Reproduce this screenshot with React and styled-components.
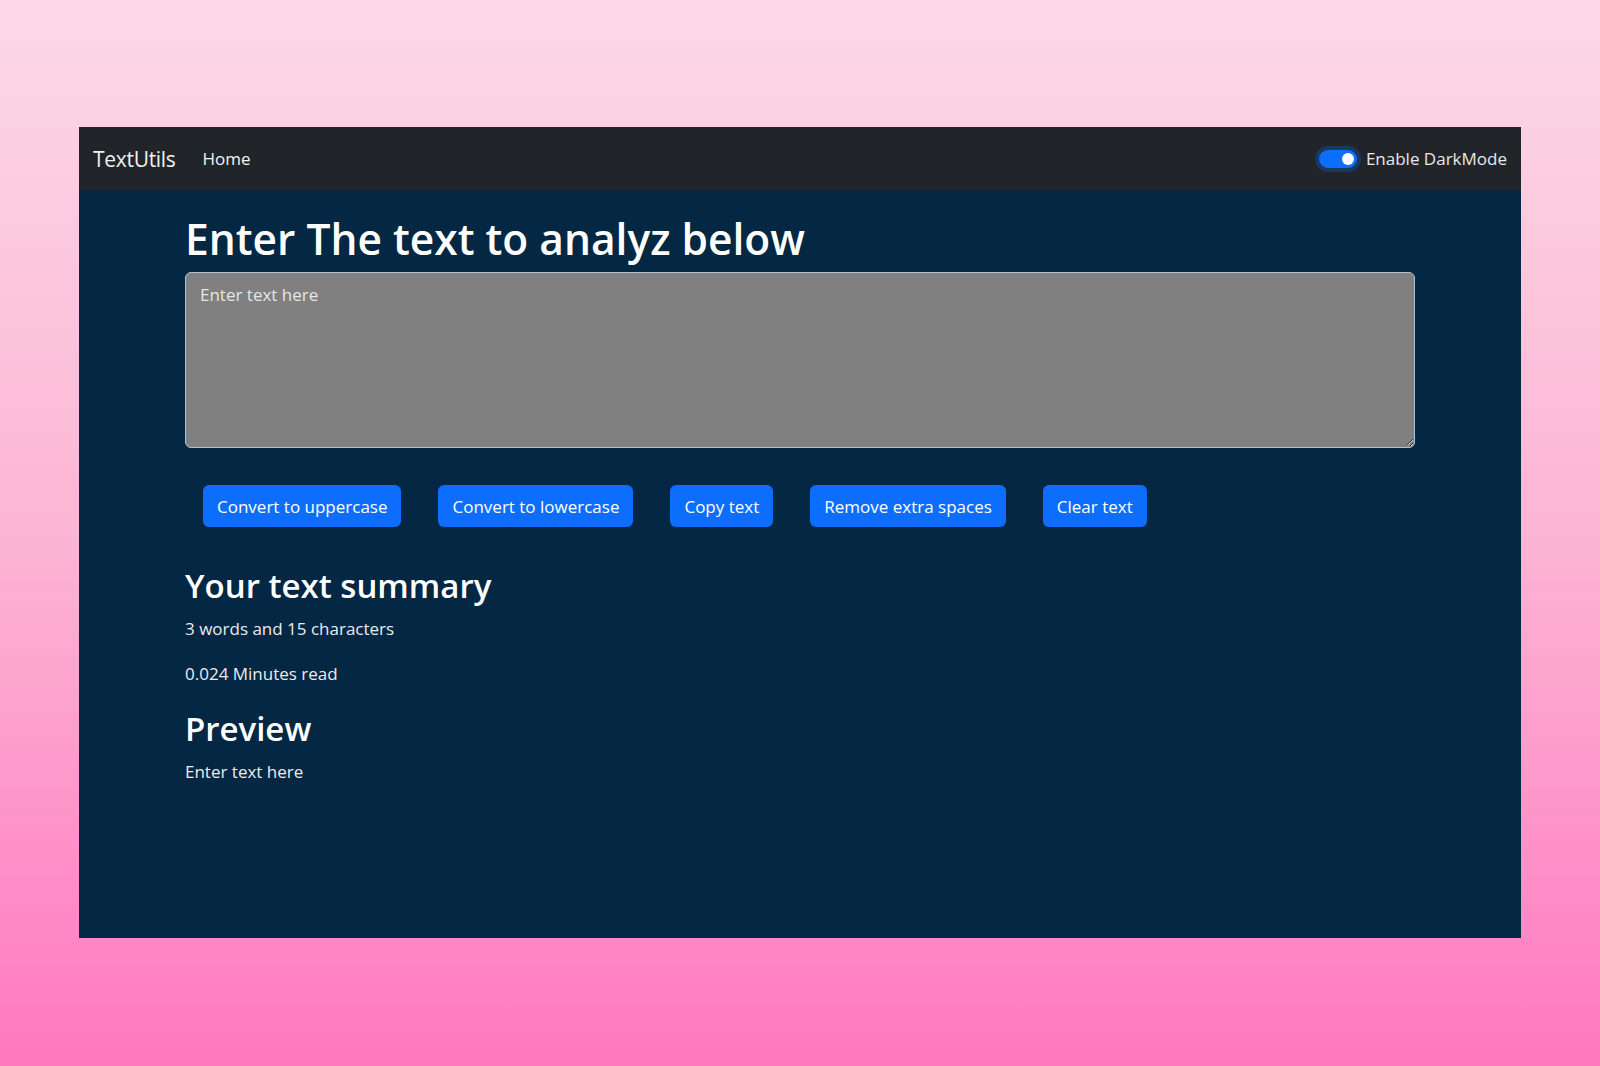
import React, { useState } from "react";
import styled, { createGlobalStyle } from "styled-components";

const GlobalStyle = createGlobalStyle`
  html, body {
    margin: 0;
    padding: 0;
  }
  body {
    min-height: 1066px;
    background: linear-gradient(180deg, #fcd9e6 0%, #fcb5d4 50%, #ff78c0 100%);
    font-family: "Open Sans", "Noto Sans", sans-serif;
  }
`;

const S = {};
S.Page = styled.div`
  padding: 127px 79px 0 79px;
`;
S.Window = styled.div`
  width: 1442px;
  height: 811px;
  background: #042743;
  display: flex;
  flex-direction: column;
`;
S.Nav = styled.nav`
  height: 63px;
  background: #212529;
  display: flex;
  align-items: center;
  padding: 0 14px 0 14px;
`;
S.Brand = styled.span`
  color: #f1f1f1;
  font-size: 21px;
  margin-right: 27px;
  letter-spacing: -0.3px;
`;
S.NavLink = styled.span`
  color: #f4f4f4;
  font-size: 17px;
`;
S.Spacer = styled.div`
  flex: 1;
`;
S.Switch = styled.div`
  width: 38px;
  height: 18px;
  border-radius: 9px;
  background: #0d6efd;
  box-shadow: 0 0 0 4px rgba(13, 110, 253, 0.25);
  display: flex;
  align-items: center;
  justify-content: flex-end;
  padding: 0 3px;
  box-sizing: border-box;
  margin-right: 9px;
`;
S.Knob = styled.div`
  width: 12px;
  height: 12px;
  border-radius: 50%;
  background: #ffffff;
`;
S.SwitchLabel = styled.span`
  color: #e8e8e8;
  font-size: 17px;
`;
S.Content = styled.main`
  padding: 23px 106px 0 106px;
  color: #ffffff;
`;
S.Title = styled.h1`
  margin: 0 0 7px 0;
  font-size: 42.5px;
  line-height: 52px;
  font-weight: 600;
`;
S.TextArea = styled.textarea`
  display: block;
  width: 100%;
  height: 176px;
  box-sizing: border-box;
  background: #808080;
  border: 1px solid #b3c0cd;
  border-radius: 6px;
  padding: 10px 14px;
  font-family: "Open Sans", "Noto Sans", sans-serif;
  font-size: 17px;
  color: #ffffff;
  &::placeholder {
    color: #e6e6e6;
  }
`;
S.ButtonRow = styled.div`
  display: flex;
  gap: 37px;
  padding-left: 18px;
  margin-top: 37px;
`;
S.Button = styled.button`
  height: 42px;
  padding: 0 14px;
  background: #0d6efd;
  border: none;
  border-radius: 6px;
  color: #ffffff;
  font-family: "Open Sans", "Noto Sans", sans-serif;
  font-size: 17px;
`;
S.SubTitle = styled.h2`
  margin: ${({ first }) => (first ? "38px" : "21px")} 0 10px 0;
  font-size: 33px;
  line-height: 41px;
  font-weight: 600;
`;
S.Text = styled.p`
  margin: 0 0 19px 0;
  font-size: 17px;
  line-height: 26px;
  color: #ececec;
  &:last-child {
    margin-bottom: 0;
  }
`;

const buttons = [
  "Convert to uppercase",
  "Convert to lowercase",
  "Copy text",
  "Remove extra spaces",
  "Clear text",
];

export default function App() {
  const [text, setText] = useState("");

  return (
    <S.Page>
      <GlobalStyle />
      <S.Window>
        <S.Nav>
          <S.Brand>TextUtils</S.Brand>
          <S.NavLink>Home</S.NavLink>
          <S.Spacer />
          <S.Switch>
            <S.Knob />
          </S.Switch>
          <S.SwitchLabel>Enable DarkMode</S.SwitchLabel>
        </S.Nav>
        <S.Content>
          <S.Title>Enter The text to analyz below</S.Title>
          <S.TextArea
            placeholder="Enter text here"
            value={text}
            onChange={(e) => setText(e.target.value)}
          />
          <S.ButtonRow>
            {buttons.map((label) => (
              <S.Button key={label}>{label}</S.Button>
            ))}
          </S.ButtonRow>
          <S.SubTitle first>Your text summary</S.SubTitle>
          <S.Text>3 words and 15 characters</S.Text>
          <S.Text>0.024 Minutes read</S.Text>
          <S.SubTitle>Preview</S.SubTitle>
          <S.Text>Enter text here</S.Text>
        </S.Content>
      </S.Window>
    </S.Page>
  );
}
